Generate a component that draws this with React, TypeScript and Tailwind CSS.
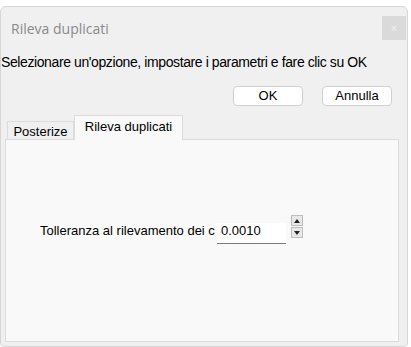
import React from "react";

const f = { fontFamily: '"Liberation Sans", Arial, sans-serif' };

export default function App() {
  return (
    <div className="w-[411px] h-[347px] bg-white pt-[6px] overflow-hidden" style={f}>
      <div className="w-[408px] h-[341px] bg-[#f0f0f0] border border-[#d6d6d6] rounded-t-[6px] rounded-b-[4px] flex flex-col">
        <div className="h-[42px] flex items-center justify-between pl-[10px] pr-[1px]">
          <span className="text-[14px] text-[#8a8a8a]" style={{ fontFamily: '"Open Sans", sans-serif' }}>
            Rileva duplicati
          </span>
          <div className="w-[24px] h-[24px] bg-[#dadada] flex items-center justify-center text-[11px] text-[#f2f2f2] leading-none">
            ×
          </div>
        </div>
        <div className="h-[16px] mt-[5px] text-[14px] leading-[16px] text-black whitespace-nowrap tracking-[-0.4px]">
          Selezionare un'opzione, impostare i parametri e fare clic su OK
        </div>
        <div className="flex justify-end gap-[19px] pr-[15px] mt-[16px]">
          <div className="w-[70px] h-[20px] bg-white border border-[#cfcfcf] rounded-[4px] flex items-center justify-center text-[13px] text-black">
            OK
          </div>
          <div className="w-[70px] h-[20px] bg-white border border-[#cfcfcf] rounded-[4px] flex items-center justify-center text-[13px] text-black">
            Annulla
          </div>
        </div>
        <div className="flex items-end pl-[6px] mt-[8px] h-[25px] relative z-10">
          <div className="w-[67px] h-[18px] border border-b-0 border-[#dcdcdc] bg-[#f0f0f0] flex items-center justify-center text-[13px] text-black pt-[2px]">
            Posterize
          </div>
          <div className="w-[109px] h-[25px] border border-b-0 border-[#dcdcdc] bg-[#f9f9f9] flex items-start justify-center text-[13px] text-black pt-[1px] mb-[-1px]">
            Rileva duplicati
          </div>
        </div>
        <div className="ml-[4px] mr-[8px] mb-[4px] flex-1 bg-[#f9f9f9] border border-[#dcdcdc] pt-[75px] pl-[34px] flex items-start">
          <div className="flex items-start">
            <span className="mt-[8px] text-[13px] leading-[16px] text-black whitespace-nowrap w-[177px] overflow-hidden">
              Tolleranza al rilevamento dei c
            </span>
            <div className="mt-[8px] w-[69px] h-[21px] bg-white border-b border-[#7a7a7a] text-[13px] leading-[16px] pl-[4px] text-black">
              0.0010
            </div>
            <div className="ml-[5px] flex flex-col gap-[1px]">
              <div className="w-[12px] h-[11px] bg-[#e8e8e8] border border-[#bdbdbd] flex items-center justify-center">
                <svg width="6" height="4" viewBox="0 0 6 4"><path d="M3 0 L6 4 L0 4 Z" fill="#222" /></svg>
              </div>
              <div className="w-[12px] h-[11px] bg-[#e8e8e8] border border-[#bdbdbd] flex items-center justify-center">
                <svg width="6" height="4" viewBox="0 0 6 4"><path d="M0 0 L6 0 L3 4 Z" fill="#222" /></svg>
              </div>
            </div>
          </div>
        </div>
      </div>
    </div>
  );
}
